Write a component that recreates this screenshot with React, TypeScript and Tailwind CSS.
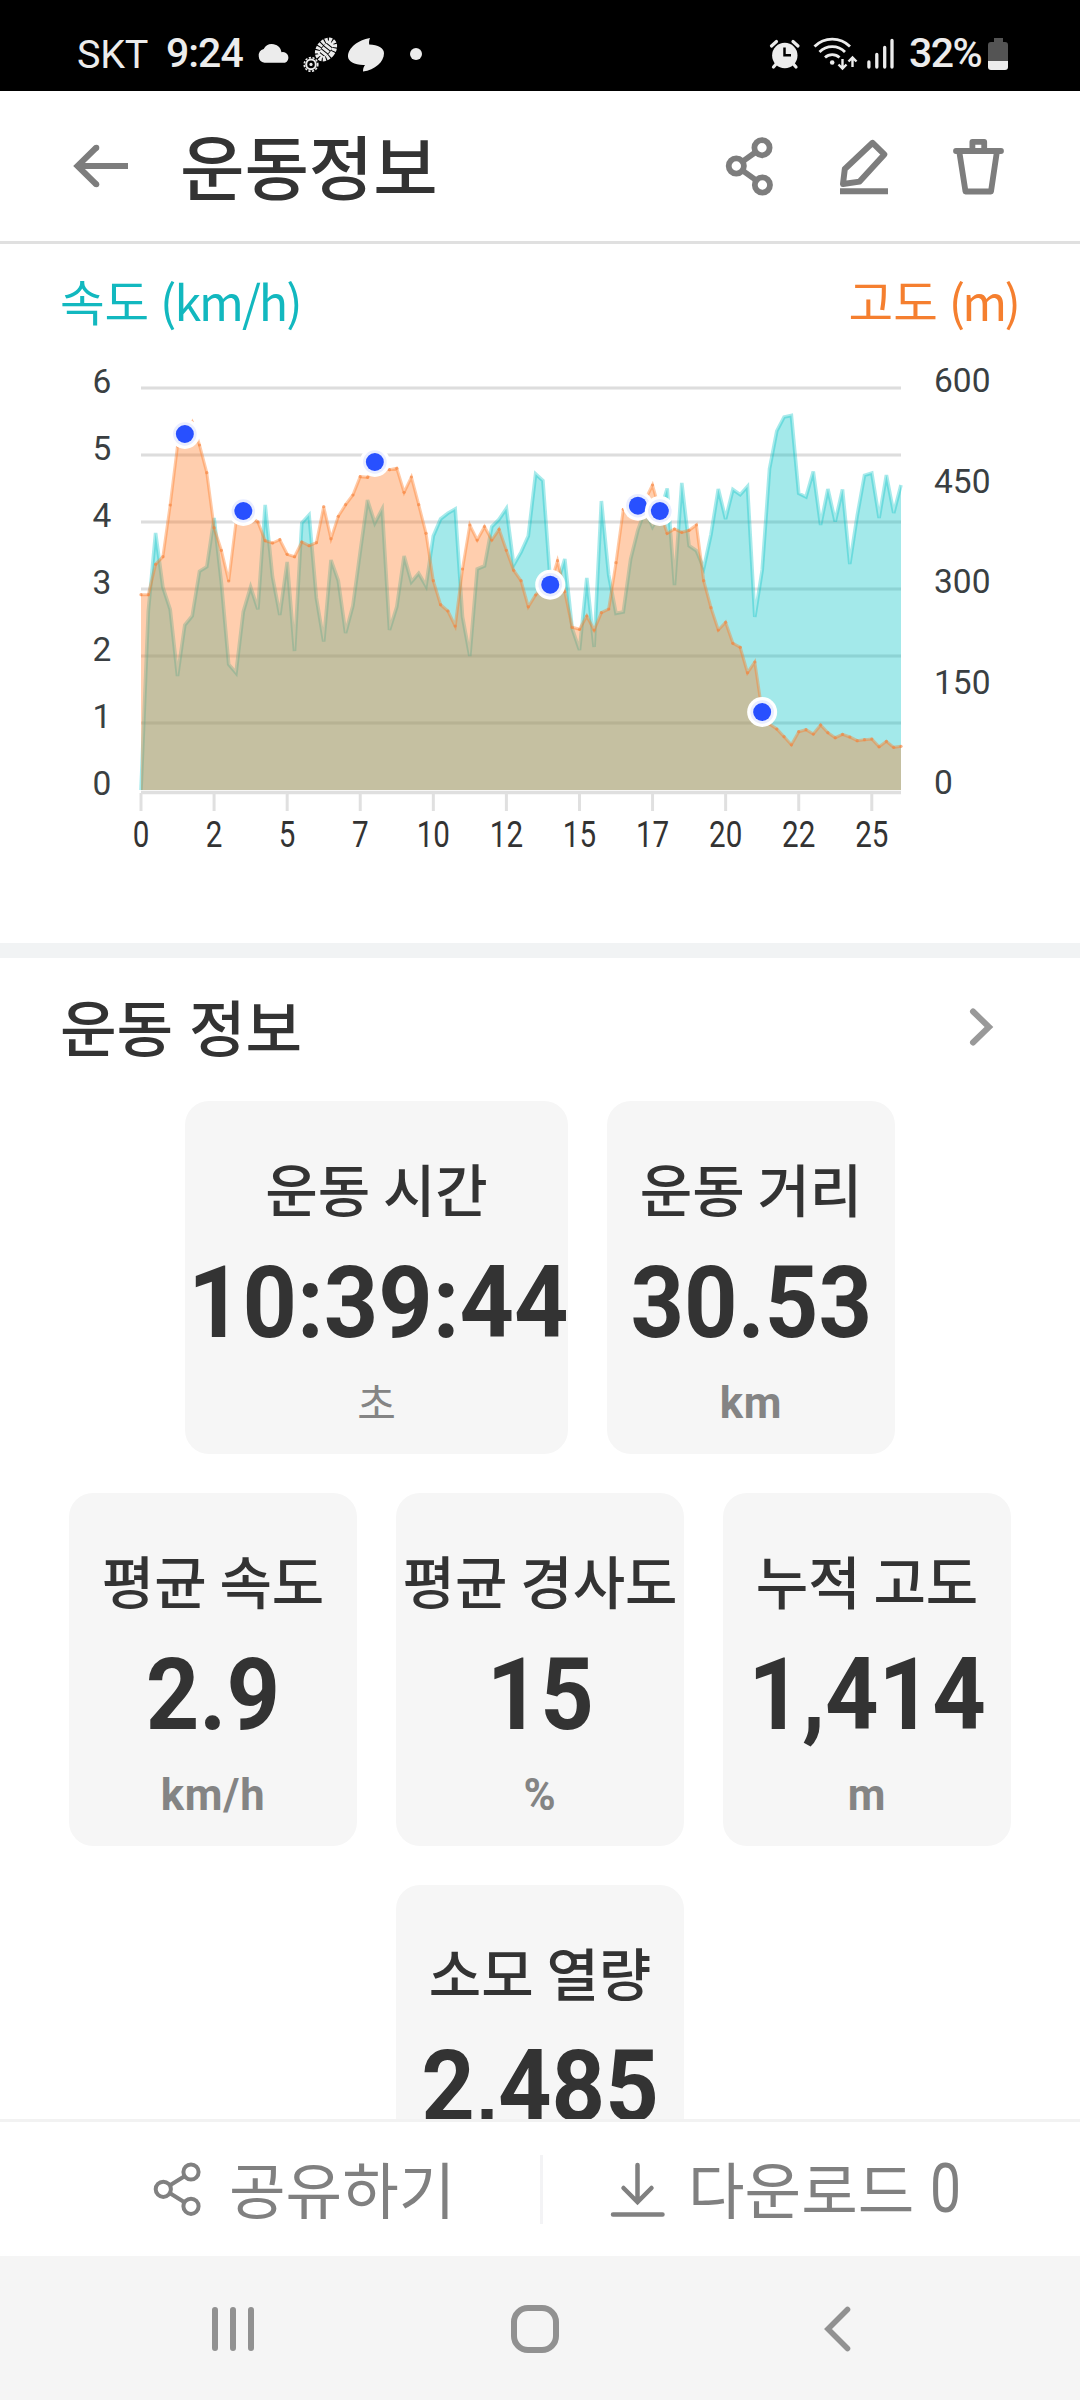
import type { ReactNode } from "react";

const X0 = 141;
const STEP = 7.3077;
const BASE = 790;

// pixel heights of every sample, one per 0.25 km
const altitude = [
  594.7, 594.7, 564.3, 556.7, 505, 446, 434, 422, 445, 472.7, 527.7, 550.3, 581, 522, 511, 516.7, 522, 540.7, 543, 539.7,
  554.3, 556.7, 542, 545.7, 542.7, 506.7, 538.7, 516.3, 504.7, 495, 476.7, 477.3, 462, 467, 469.7, 468.3, 492.3, 477, 504.7, 533.3,
  580.7, 604.7, 611, 626, 569, 525, 540, 526.7, 540, 529.3, 550.3, 570.3, 580.7, 606.7, 595, 586.7, 584.7, 560.7, 591.7, 627.3,
  629.3, 616, 630, 612.7, 609, 562.7, 509.3, 507, 505.7, 500, 485, 511, 533.3, 529, 532.3, 530.3, 525, 580.7, 607.7, 630,
  622.3, 643.3, 647.3, 672.7, 662, 712, 724, 729, 736.7, 744.7, 731.7, 729.7, 734, 725, 732.7, 737.7, 734.3, 737, 740.7, 739.7,
  739, 746.7, 741.3, 747.3, 746.3,
];

const speed = [
  790, 611, 533, 587.3, 609.5, 676, 625, 616, 571.3, 566.7, 518, 583, 664.3, 673, 611.7, 587, 609.3, 505, 576.7, 615,
  562, 651, 523, 515, 598, 641.5, 560, 580.7, 633, 605.7, 551.7, 500, 523, 509, 630, 606.7, 556, 582, 573.3, 586,
  536, 519, 513.3, 509, 616.7, 656, 569, 566, 526.7, 519.3, 508.5, 565, 552.3, 536, 474, 480.7, 580, 583, 559, 628.7,
  650, 578, 647, 501, 575, 613.3, 612, 559.3, 530, 510, 526.7, 513, 488.5, 585, 483, 545.7, 550.7, 568.3, 534.3, 489,
  519, 489.5, 494.7, 486.5, 617, 570, 469, 431, 417, 415.5, 493.3, 497, 471.5, 525, 489, 521.5, 489.5, 564, 515.7, 475.3,
  473, 518, 475, 513, 485,
];

const markers = [6, 14, 32, 56, 68, 71, 85];

const line = (data: number[]) => data.map((y, i) => `${i ? "L" : "M"}${(X0 + i * STEP).toFixed(1)} ${y}`).join("");
const area = (data: number[]) => `${line(data)}L901 ${BASE}L${X0} ${BASE}Z`;

function Icon({ box, w, h, className = "", children }: { box: string; w: number; h: number; className?: string; children: ReactNode }) {
  return (
    <svg viewBox={box} width={w} height={h} fill="none" className={`block shrink-0 ${className}`}>
      {children}
    </svg>
  );
}

function StatusBar() {
  return (
    <div className="flex h-[91px] shrink-0 items-start bg-black pt-9 font-[Roboto] text-[#ececec]">
      <span className="ml-[77px] w-[89px] pt-px text-[39.5px] leading-[36px] tracking-[-0.2px]">SKT</span>
      <span className="w-[90px] text-[41px] leading-[34px] font-medium tracking-[-1px]">9:24</span>
      <Icon box="256 36 36 36" w={36} h={36}>
        <path d="M264.5 62.7a7 7 0 0 1-.8-13.6A9.5 9.5 0 0 1 281.5 52.3 5.5 5.5 0 0 1 285 62.7Z" fill="#ececec" />
      </Icon>
      <Icon box="302 36 38 38" w={38} h={38} className="ml-2.5">
        <g stroke="#ececec">
          <circle cx="311" cy="64.4" r="4.8" strokeWidth="2" />
          <circle cx="311" cy="64.4" r="6.8" strokeWidth="1.6" strokeDasharray="2.2 1.5" />
          <circle cx="311" cy="64.4" r="1.6" fill="#ececec" stroke="none" />
          <g transform="rotate(38 326 49.5)">
            <ellipse cx="326" cy="49.5" rx="7.2" ry="10.5" strokeWidth="5" strokeDasharray="2.8 1" />
            <path d="M326 41v17" strokeWidth="8" strokeDasharray="2.8 1" />
          </g>
        </g>
      </Icon>
      <Icon box="346 36 40 38" w={40} h={38} className="ml-1.5">
        <path d="M370 38c-12 2-22 10-22 18.5 0 5 7 9 17 8.5-1.5 2-2 4-2 6.6 12-2 21-9.5 21-18.4 0-5.200-6-8.700-14.800-8.700-.4-2.300 0-4.500.8-6.500Z" fill="#ececec" />
      </Icon>
      <i className="mt-3 ml-6 size-3 rounded-full bg-[#ececec]" />
      <Icon box="768 36 34 36" w={34} h={36} className="ml-[346px]">
        <circle cx="784.8" cy="55.5" r="12.7" fill="#ececec" />
        <path d="M771.5 46l5-4.5M798 46l-5-4.5M777 63l-3.5 4M792.5 63l3.5 4" stroke="#ececec" strokeWidth="3.2" strokeLinecap="round" />
        <path d="M784.5 47.5v7.8h6.5" stroke="#000" strokeWidth="2.5" />
      </Icon>
      <Icon box="812 36 46 36" w={46} h={36} className="ml-2.5">
        <g stroke="#ececec" strokeWidth="2.8">
          <path d="M814.5 46.5a25 25 0 0 1 35.5 0M819.5 52a18 18 0 0 1 25.5 0M825 57.5a10.5 10.5 0 0 1 14.5 0" />
          <path d="M842.5 59v9M838.5 64.5l4 4 4-4M852.5 67v-9M848.5 61.5l4-4 4 4" strokeWidth="2.4" />
        </g>
        <circle cx="832.2" cy="62.5" r="2.3" fill="#ececec" />
      </Icon>
      <Icon box="866 36 28 36" w={28} h={36} className="ml-2">
        <path d="M868.9 62v5M876.8 54.5v12.5M884.7 47.5v19.5M892 40.5v26.5" stroke="#ececec" strokeWidth="3.3" strokeLinecap="round" />
      </Icon>
      <span className="ml-[15px] w-[79px] text-[41px] leading-[34px] font-medium tracking-[-1.5px]">32%</span>
      <Icon box="988 36 20 36" w={20} h={36}>
        <path d="M994 38h9v4h2a3 3 0 0 1 3 3v16h-20v-16a3 3 0 0 1 3-3h3Z" fill="#545454" />
        <path d="M988 61h20v6a3 3 0 0 1-3 3h-14a3 3 0 0 1-3-3Z" fill="#ececec" />
      </Icon>
    </div>
  );
}

function Header() {
  return (
    <header className="flex h-[153px] shrink-0 items-center border-b-[3px] border-[#e0e0e0]">
      <Icon box="72 136 60 60" w={60} h={60} className="ml-[72px]">
        <path d="M128 166H78M96.4 147.5L77.5 166l18.9 18.5" stroke="#7d7d7d" strokeWidth="6" />
        <circle cx="96.4" cy="147.7" r="2.9" fill="#7d7d7d" />
        <circle cx="96.4" cy="184.3" r="2.9" fill="#7d7d7d" />
      </Icon>
      <h1 className="ml-[48px] pb-0.5 text-[70px] leading-[100px] font-medium whitespace-nowrap">운동정보</h1>
      <div className="mr-[72px] ml-auto flex gap-[54px] text-[#7d7d7d]">
        <Icon box="720 136 60 60" w={60} h={60}>
          <g stroke="currentColor" strokeWidth="5.8">
            <circle cx="736.3" cy="166" r="7.6" />
            <circle cx="762" cy="147.7" r="7.6" />
            <circle cx="762.4" cy="185" r="7.6" />
            <path d="M742.5 161.5l13.5-9.6M742.5 170.5l14 10" />
          </g>
        </Icon>
        <Icon box="834 136 60 60" w={60} h={60}>
          <path d="M872.6 142.8l11.7 11.6-24.7 27.2-16.6 2.4 1.8-15ZM840 191.3h48" stroke="currentColor" strokeWidth="6" strokeLinejoin="round" />
        </Icon>
        <Icon box="948 136 60 60" w={60} h={60}>
          <path d="M956 151h45M972.4 150v-8.2h11.8v8.2M959.5 153l6 38.5h25.5l5.7-38.5" stroke="currentColor" strokeWidth="5.8" strokeLinecap="round" strokeLinejoin="round" />
        </Icon>
      </div>
    </header>
  );
}

function Chart() {
  return (
    <section className="h-[699px] shrink-0">
      <div className="flex h-[106px] justify-between pt-[25px] pr-[62px] pl-[60px] text-[48.5px] leading-[62px] whitespace-nowrap">
        <span className="text-[#12b8bf]">
          속도 <span className="tracking-[-2.1px]">(km/h)</span>
        </span>
        <span className="text-[#f57f2f]">
          고도 <span className="tracking-[-2.8px]">(m)</span>
        </span>
      </div>
      <svg viewBox="0 350 1080 593" width="1080" height="593" className="block font-[Roboto]">
        {[388, 455, 522, 589, 656, 723].map((y) => (
          <g key={y}>
            <path d={`M141 ${y}H901`} stroke="#ededed" strokeWidth="4" />
            <path d={`M141 ${y}H901`} stroke="#dddddd" strokeWidth="2" />
          </g>
        ))}
        <path d="M141 792.5H901" stroke="#dfdfdf" strokeWidth="3.5" />
        <path d={area(speed)} fill="#00c2c5" fillOpacity=".36" />
        <path d={line(speed)} fill="none" stroke="#00c2c5" strokeOpacity=".34" strokeWidth="3.6" />
        <path d={area(altitude)} fill="#ff7a24" fillOpacity=".37" />
        <path d={line(altitude)} fill="none" stroke="#ff7a24" strokeOpacity=".4" strokeWidth="3" />
        {altitude.map((y, i) => (
          <circle key={i} cx={X0 + i * STEP} cy={y} r="1.6" fill="#f5803a" fillOpacity=".6" />
        ))}
        {markers.map((i) => (
          <g key={i}>
            <circle cx={X0 + i * STEP} cy={altitude[i]} r="15" fill="#fff" />
            <circle cx={X0 + i * STEP} cy={altitude[i]} r="11.8" fill="#e9edff" />
            <circle cx={X0 + i * STEP} cy={altitude[i]} r="9" fill="#2850ff" />
          </g>
        ))}
        {["0", "2", "5", "7", "10", "12", "15", "17", "20", "22", "25"].map((t, i) => (
          <g key={t}>
            <path d={`M${X0 + i * 73.08} 793V811`} stroke="#e0e0e0" strokeWidth="3" />
            <text transform={`translate(${X0 + i * 73.08} 847) scale(.81 1)`} textAnchor="middle" fontSize="36.5" fill="#333">
              {t}
            </text>
          </g>
        ))}
        <g fontSize="33.5" fill="#3a3f42">
          {["6", "5", "4", "3", "2", "1", "0"].map((t, i) => (
            <text key={t} x="92.5" y={393 + i * 67}>{t}</text>
          ))}
          {["600", "450", "300", "150", "0"].map((t, i) => (
            <text key={t} x="934" y={392 + i * 100.5}>{t}</text>
          ))}
        </g>
      </svg>
    </section>
  );
}

function Stat({ label, value, unit, wide }: { label: string; value: string; unit?: string; wide?: boolean }) {
  return (
    <div className={`flex h-[353px] flex-col items-center rounded-3xl bg-[#f6f6f6] pt-[52px] whitespace-nowrap ${wide ? "w-[383px]" : "w-[288px]"}`}>
      <p className="text-[57px] leading-[68px] font-medium">{label}</p>
      <p className={`mt-8 font-[Roboto] text-[100px] leading-[100px] font-bold ${wide ? "translate-x-0.5 scale-x-[0.95]" : "scale-x-[0.935]"}`}>{value}</p>
      {unit && (
        <p className={`leading-[50px] text-[#848484] ${unit === "초" ? "mt-[23px] text-[42px]" : "mt-[26px] font-[Roboto] text-[43.5px] font-bold tracking-[0.8px]"}`}>
          {unit}
        </p>
      )}
    </div>
  );
}

function Footer() {
  return (
    <footer className="flex h-[137px] shrink-0 items-center border-t-[3px] border-[#f2f2f2] bg-white text-[61.5px] leading-[90px] whitespace-nowrap text-[#808080]">
      <div className="flex w-[540px] items-center">
        <Icon box="152 2160 52 58" w={52} h={58} className="ml-[152px]">
          <g stroke="currentColor" strokeWidth="4">
            <circle cx="163.3" cy="2189.3" r="7.6" />
            <circle cx="191" cy="2172" r="7.6" />
            <circle cx="191" cy="2206.3" r="7.6" />
            <path d="M170 2185.3l14.5-9M170 2193.3l14.5 9" />
          </g>
        </Icon>
        <span className="ml-[25px] pb-0.5">공유하기</span>
      </div>
      <div className="h-[69px] w-[3px] bg-[#f3f3f5]" />
      <div className="flex items-center">
        <Icon box="608 2160 60 58" w={60} h={58} className="ml-[65px]">
          <path d="M613 2214.5h49.5M637.5 2165v36M623.5 2188l14 14 14-14" stroke="currentColor" strokeWidth="4.5" strokeLinecap="round" />
        </Icon>
        <span className="ml-5 pb-0.5">다운로드</span>
        <span className="ml-4 origin-left scale-x-[0.8] font-[Roboto] text-[69px]">0</span>
      </div>
    </footer>
  );
}

function NavBar() {
  return (
    <nav className="flex h-36 shrink-0 items-center bg-[#f5f5f5]">
      <Icon box="205 2300 56 58" w={56} h={58} className="mt-0.5 ml-[205px]">
        <path d="M215 2310v38M233 2310v38M251 2310v38" stroke="#919191" strokeWidth="6" strokeLinecap="round" />
      </Icon>
      <Icon box="506 2300 58 58" w={58} h={58} className="mt-0.5 ml-[245px]">
        <rect x="514" y="2308" width="42" height="42" rx="14" stroke="#919191" strokeWidth="6" />
      </Icon>
      <Icon box="816 2300 44 58" w={44} h={58} className="mt-0.5 ml-[252px]">
        <path d="M847.5 2309.5L828 2329l19.5 19.5" stroke="#919191" strokeWidth="5.6" strokeLinecap="round" />
      </Icon>
    </nav>
  );
}

export default function App() {
  return (
    <div className="flex h-[2400px] w-[1080px] flex-col overflow-hidden bg-white font-['Noto_Sans_CJK_KR',sans-serif] text-[#333333]">
      <StatusBar />
      <Header />
      <main className="flex min-h-0 flex-1 flex-col overflow-hidden">
        <Chart />
        <div className="h-[15px] shrink-0 bg-[#f1f3f4]" />
        <section className="shrink-0">
          <div className="flex h-[143px] items-center justify-between pr-[82px] pl-[60px]">
            <h2 className="pb-2 text-[61.5px] leading-[90px] font-medium [word-spacing:2px]">운동 정보</h2>
            <Icon box="966 1005 32 44" w={32} h={44} className="-mt-1.5">
              <path d="M973 1011.5l16 15.5-16 15.5" stroke="#999" strokeWidth="6" strokeLinecap="round" />
            </Icon>
          </div>
          <div className="flex flex-col gap-[39px]">
            <div className="flex justify-center gap-[39px]">
              <Stat label="운동 시간" value="10:39:44" unit="초" wide />
              <Stat label="운동 거리" value="30.53" unit="km" />
            </div>
            <div className="flex justify-center gap-[39px]">
              <Stat label="평균 속도" value="2.9" unit="km/h" />
              <Stat label="평균 경사도" value="15" unit="%" />
              <Stat label="누적 고도" value="1,414" unit="m" />
            </div>
            <div className="flex justify-center">
              <Stat label="소모 열량" value="2,485" />
            </div>
          </div>
        </section>
      </main>
      <Footer />
      <NavBar />
    </div>
  );
}
